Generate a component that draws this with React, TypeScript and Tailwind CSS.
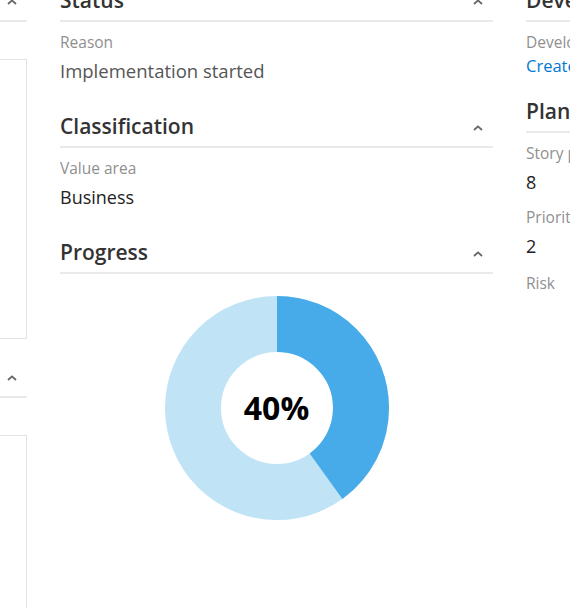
import React from "react";

const FONT = { fontFamily: '"Segoe UI", "Open Sans", "Noto Sans", sans-serif' };

const Chevron = () => (
    <svg width="10" height="6" viewBox="0 0 10 6" className="mb-[9px] mr-[10px] shrink-0">
        <path d="M1 5 L5 1.4 L9 5" fill="none" stroke="#666" strokeWidth="1.8" />
    </svg>
);

const SectionHeader = ({ title, chevron = true }: { title: string; chevron?: boolean }) => (
    <div className="flex items-end justify-between border-b-2 border-[#eaeaea] pb-[6px]">
        <h2 className="whitespace-nowrap text-[21px] font-semibold leading-[28px] text-[#333]">{title || "\u00a0"}</h2>
        {chevron && <Chevron />}
    </div>
);

const Label = ({ children }: { children: React.ReactNode }) => (
    <div className="whitespace-nowrap text-[15.5px] leading-5 text-[#8f8f8f]">{children}</div>
);

const Value = ({ children, muted }: { children: React.ReactNode; muted?: boolean }) => (
    <div className={`mt-[6px] whitespace-nowrap text-[18px] leading-[26px] ${muted ? "text-[#555]" : "text-[#222]"}`}>
        {children}
    </div>
);

const Donut = ({ percent }: { percent: number }) => {
    const r = 84;
    const c = 2 * Math.PI * r;
    return (
        <div className="relative h-[224px] w-[224px]">
            <svg width="224" height="224" viewBox="0 0 224 224">
                <circle cx="112" cy="112" r={r} fill="none" stroke="#c0e3f6" strokeWidth="56" />
                <circle
                    cx="112"
                    cy="112"
                    r={r}
                    fill="none"
                    stroke="#47abe9"
                    strokeWidth="56"
                    strokeDasharray={`${(c * percent) / 100} ${c}`}
                    transform="rotate(-90 112 112)"
                />
            </svg>
            <div className="absolute inset-0 flex items-center justify-center text-[32px] font-bold text-black">
                {percent}%
            </div>
        </div>
    );
};

export default function App() {
    return (
        <div className="h-[608px] w-[570px] overflow-hidden bg-white" style={FONT}>
            <div className="mt-[-14px] flex gap-[33px]">
                {/* left column, cut off */}
                <div className="ml-[-33px] w-[60px] shrink-0">
                    <SectionHeader title="" />
                    <div className="mt-[37px] h-[280px] border border-[#e3e3e3]" />
                    <div className="mt-[23px]">
                        <SectionHeader title="" />
                    </div>
                    <div className="mt-[37px] h-[300px] border border-[#e3e3e3]" />
                </div>

                {/* middle column */}
                <div className="w-[433px] shrink-0">
                    <SectionHeader title="Status" />
                    <div className="mt-[10px]">
                        <Label>Reason</Label>
                        <Value muted>
                            <span className="text-[18.5px]">Implementation started</span>
                        </Value>
                    </div>
                    <div className="mt-7">
                        <SectionHeader title="Classification" />
                    </div>
                    <div className="mt-[10px]">
                        <Label>Value area</Label>
                        <Value>Business</Value>
                    </div>
                    <div className="mt-7">
                        <SectionHeader title="Progress" />
                    </div>
                    <div className="mt-[22px] flex justify-center">
                        <Donut percent={40} />
                    </div>
                </div>

                {/* right column, cut off */}
                <div className="w-[260px] shrink-0">
                    <SectionHeader title="Development" chevron={false} />
                    <div className="mt-[10px]">
                        <Label>Development</Label>
                        <div className="mt-[3px] whitespace-nowrap text-[16.5px] leading-[22px] text-[#0078d4]">Create a branch</div>
                    </div>
                    <div className="mt-5">
                        <SectionHeader title="Planning" chevron={false} />
                    </div>
                    <div className="mt-[10px]">
                        <Label>Story points</Label>
                        <Value>8</Value>
                        <div className="mt-3">
                            <Label>Priority</Label>
                        </div>
                        <Value>2</Value>
                        <div className="mt-[14px]">
                            <Label>Risk</Label>
                        </div>
                    </div>
                </div>
            </div>
        </div>
    );
}
